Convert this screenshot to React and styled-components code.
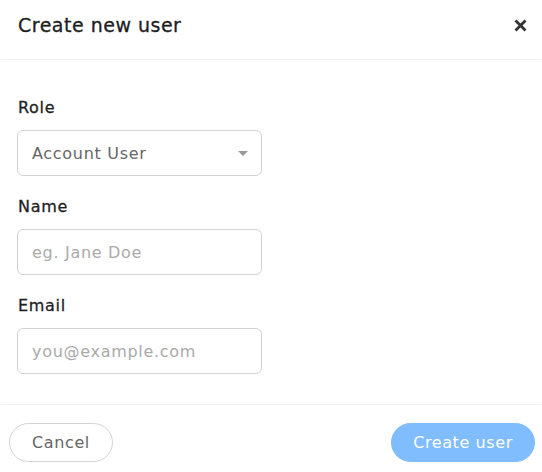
import React from 'react';
import styled, { createGlobalStyle } from 'styled-components';

const GlobalStyle = createGlobalStyle`
  html, body {
    margin: 0;
    padding: 0;
    background: #ffffff;
  }
  body {
    font-family: "DejaVu Sans", "Liberation Sans", sans-serif;
    color: #222;
  }
  * { box-sizing: border-box; }
`;

export default function App() {
  return (
    <React.Fragment>
      <GlobalStyle />
      <Modal>
        <Header>
          <Title>Create new user</Title>
          <CloseButton aria-label="Close">
            <svg width="13" height="13" viewBox="0 0 13 13">
              <path d="M1.5 1.5 L11.5 11.5 M11.5 1.5 L1.5 11.5" stroke="#333" strokeWidth="2.8" strokeLinecap="butt" />
            </svg>
          </CloseButton>
        </Header>
        <Body>
          <Field>
            <Label>Role</Label>
            <SelectBox>
              <span>Account User</span>
              <Caret />
            </SelectBox>
          </Field>
          <Field>
            <Label>Name</Label>
            <Input placeholder="eg. Jane Doe" />
          </Field>
          <Field>
            <Label>Email</Label>
            <Input placeholder="you@example.com" />
          </Field>
        </Body>
        <Footer>
          <Button>Cancel</Button>
          <Button primary disabled>Create user</Button>
        </Footer>
      </Modal>
    </React.Fragment>
  );
}

const Modal = styled.div`
  width: 542px;
  height: 472px;
  overflow: hidden;
  background: #fff;
`

const Header = styled.div`
  height: 60px;
  display: flex;
  align-items: center;
  justify-content: space-between;
  padding: 0 14px 9px 18px;
  border-bottom: 1px solid #f2f2f2;
  box-shadow: 0 1px 2px rgba(0, 0, 0, 0.02);
`

const Title = styled.h2`
  margin: 0;
  font-size: 19px;
  font-weight: normal;
  letter-spacing: 0.5px;
  color: #1e1e1e;
  -webkit-text-stroke: 0.3px #1e1e1e;
`

const CloseButton = styled.button`
  border: none;
  background: transparent;
  padding: 0;
  width: 16px;
  height: 16px;
  display: flex;
  align-items: center;
  justify-content: center;
  cursor: pointer;
`

const Body = styled.div`
  padding: 38px 18px 30px 17px;
  display: flex;
  flex-direction: column;
  gap: 21px;
`

const Field = styled.div`
  display: flex;
  flex-direction: column;
`

const Label = styled.label`
  font-size: 16px;
  line-height: 20px;
  font-weight: normal;
  letter-spacing: 0.7px;
  color: #1e1e1e;
  -webkit-text-stroke: 0.3px #1e1e1e;
  margin: 0 0 12px 1px;
`

const SelectBox = styled.div`
  width: 245px;
  height: 46px;
  border: 1px solid #d3d3d3;
  border-radius: 6px;
  display: flex;
  align-items: center;
  justify-content: space-between;
  padding: 0 13px 0 14px;
  font-size: 16px;
  letter-spacing: 0.7px;
  color: #666;
`

const Caret = styled.span`
  width: 0;
  height: 0;
  border-left: 5px solid transparent;
  border-right: 5px solid transparent;
  border-top: 5px solid #999;
`

const Input = styled.input`
  width: 245px;
  height: 46px;
  border: 1px solid #d3d3d3;
  border-radius: 6px;
  padding: 0 14px;
  font-family: inherit;
  font-size: 16px;
  letter-spacing: 0.7px;
  color: #666;
  outline: none;
  &::placeholder {
    color: #aaa;
  }
`

const Footer = styled.div`
  display: flex;
  justify-content: space-between;
  align-items: center;
  padding: 18px 7px 18px 9px;
  border-top: 1px solid #f2f2f2;
  box-shadow: 0 -1px 2px rgba(0, 0, 0, 0.02);
`

const Button = styled.button`
  height: 39px;
  padding: 0 20px;
  min-width: ${p => (p.primary ? '144px' : '104px')};
  border-radius: 20px;
  font-family: inherit;
  font-size: 16px;
  letter-spacing: 0.6px;
  border: 1px solid ${p => (p.primary ? '#80bdff' : '#d3d3d3')};
  background: ${p => (p.primary ? '#80bdff' : '#fff')};
  color: ${p => (p.primary ? '#fff' : '#666')};
  cursor: pointer;
  &:disabled {
    cursor: default;
  }
`
